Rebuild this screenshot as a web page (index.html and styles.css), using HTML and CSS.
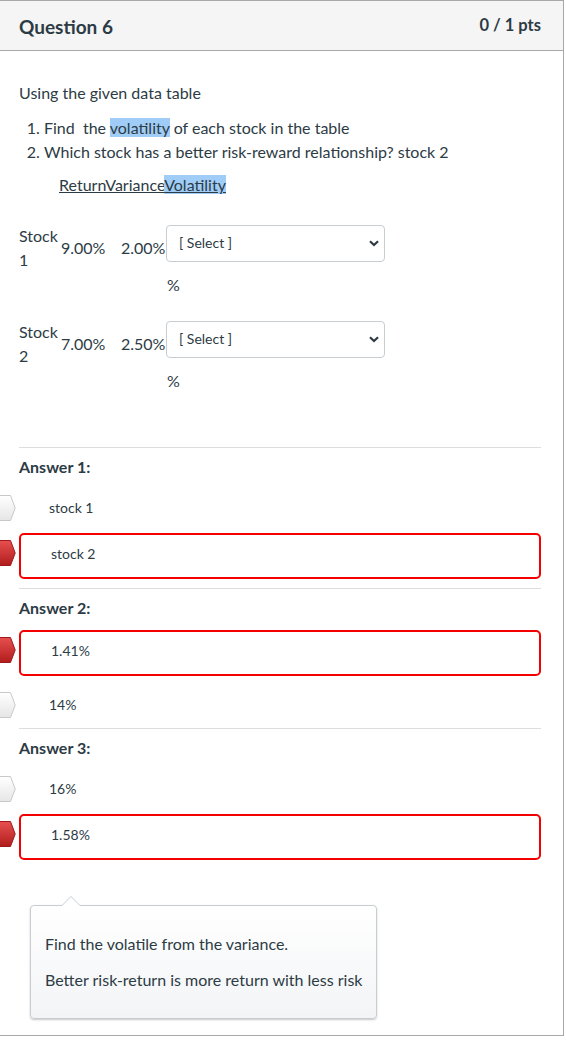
FILE: index.html
```html
<!DOCTYPE html>
<html>
<head>
<meta charset="utf-8">
<link rel="stylesheet" href="styles.css">
</head>
<body>
<div class="card">
  <div class="qhead">
    <div class="qtitle">Question 6</div>
    <div class="qpts">0 / 1 pts</div>
  </div>
  <div class="qbody">
    <p class="intro">Using the given data table</p>
    <ol class="tasks">
      <li>Find&nbsp; the <span class="hl">volatility</span> of each stock in the table</li>
      <li>Which stock has a better risk-reward relationship? stock 2</li>
    </ol>
    <p class="thead">ReturnVariance<span class="hl">Volatility</span></p>

    <div class="trow first">
      <div class="c-name">Stock 1</div>
      <div class="c-ret">9.00%</div>
      <div class="c-var">2.00%</div>
      <div class="c-sel">
        <div class="select"><span>[ Select ]</span><svg width="10" height="7" viewBox="0 0 10 7"><path d="M1 1.2 L5 5 L9 1.2" fill="none" stroke="#2d3b45" stroke-width="2.2"/></svg></div>
        <div class="pct">%</div>
      </div>
    </div>
    <div class="trow">
      <div class="c-name">Stock 2</div>
      <div class="c-ret">7.00%</div>
      <div class="c-var">2.50%</div>
      <div class="c-sel">
        <div class="select"><span>[ Select ]</span><svg width="10" height="7" viewBox="0 0 10 7"><path d="M1 1.2 L5 5 L9 1.2" fill="none" stroke="#2d3b45" stroke-width="2.2"/></svg></div>
        <div class="pct">%</div>
      </div>
    </div>

    <div class="ans">
      <div class="alabel">Answer 1:</div>
      <div class="opt">
        <svg class="flag" width="16" height="26" viewBox="0 0 16 26"><defs><linearGradient id="gw1" x1="0" y1="0" x2="0" y2="1"><stop offset="0" stop-color="#ffffff"/><stop offset="1" stop-color="#e6e6e6"/></linearGradient></defs><polygon points="-1,0.5 10.5,0.5 15.2,13 10.5,25.5 -1,25.5" fill="url(#gw1)" stroke="#c8c8c8" stroke-width="1"/></svg>
        <div class="box">stock 1</div>
      </div>
      <div class="opt sel">
        <svg class="flag" width="16" height="26" viewBox="0 0 16 26"><defs><linearGradient id="gr1" x1="0" y1="0" x2="0" y2="1"><stop offset="0" stop-color="#e85050"/><stop offset="1" stop-color="#b01c1c"/></linearGradient></defs><polygon points="-1,0.5 10.5,0.5 15.2,13 10.5,25.5 -1,25.5" fill="url(#gr1)" stroke="#a01818" stroke-width="1"/></svg>
        <div class="box">stock 2</div>
      </div>
    </div>

    <div class="ans">
      <div class="alabel">Answer 2:</div>
      <div class="opt sel">
        <svg class="flag" width="16" height="26" viewBox="0 0 16 26"><defs><linearGradient id="gr2" x1="0" y1="0" x2="0" y2="1"><stop offset="0" stop-color="#e85050"/><stop offset="1" stop-color="#b01c1c"/></linearGradient></defs><polygon points="-1,0.5 10.5,0.5 15.2,13 10.5,25.5 -1,25.5" fill="url(#gr2)" stroke="#a01818" stroke-width="1"/></svg>
        <div class="box">1.41%</div>
      </div>
      <div class="opt">
        <svg class="flag" width="16" height="26" viewBox="0 0 16 26"><defs><linearGradient id="gw2" x1="0" y1="0" x2="0" y2="1"><stop offset="0" stop-color="#ffffff"/><stop offset="1" stop-color="#e6e6e6"/></linearGradient></defs><polygon points="-1,0.5 10.5,0.5 15.2,13 10.5,25.5 -1,25.5" fill="url(#gw2)" stroke="#c8c8c8" stroke-width="1"/></svg>
        <div class="box">14%</div>
      </div>
    </div>

    <div class="ans">
      <div class="alabel">Answer 3:</div>
      <div class="opt">
        <svg class="flag" width="16" height="26" viewBox="0 0 16 26"><defs><linearGradient id="gw3" x1="0" y1="0" x2="0" y2="1"><stop offset="0" stop-color="#ffffff"/><stop offset="1" stop-color="#e6e6e6"/></linearGradient></defs><polygon points="-1,0.5 10.5,0.5 15.2,13 10.5,25.5 -1,25.5" fill="url(#gw3)" stroke="#c8c8c8" stroke-width="1"/></svg>
        <div class="box">16%</div>
      </div>
      <div class="opt sel">
        <svg class="flag" width="16" height="26" viewBox="0 0 16 26"><defs><linearGradient id="gr3" x1="0" y1="0" x2="0" y2="1"><stop offset="0" stop-color="#e85050"/><stop offset="1" stop-color="#b01c1c"/></linearGradient></defs><polygon points="-1,0.5 10.5,0.5 15.2,13 10.5,25.5 -1,25.5" fill="url(#gr3)" stroke="#a01818" stroke-width="1"/></svg>
        <div class="box">1.58%</div>
      </div>
    </div>

    <div class="comment">
      <p>Find the volatile from the variance.</p>
      <p>Better risk-return is more return with less risk</p>
    </div>
  </div>
</div>
</body>
</html>
```
FILE: styles.css
```css
html, body {
  margin: 0;
  padding: 0;
  background: #ffffff;
}
body {
  font-family: Lato, "Open Sans", "Liberation Sans", sans-serif;
  color: #2d3b45;
  font-size: 16px;
}
.card {
  width: 564px;
  box-sizing: border-box;
  border: 1px solid #a8a8a8;
  border-left: none;
}
.qhead {
  height: 49px;
  background: #f5f5f5;
  border-bottom: 1px solid #a8a8a8;
  display: flex;
  justify-content: space-between;
  align-items: flex-start;
  padding: 0 22px 0 19px;
}
.qtitle {
  font-weight: 700;
  font-size: 19px;
  line-height: 24px;
  margin-top: 14px;
}
.qpts {
  font-weight: 700;
  font-size: 16.5px;
  line-height: 24px;
  margin-top: 12px;
}
.qbody {
  padding: 30px 22px 16px 19px;
}
.intro {
  margin: 0 0 11px;
  line-height: 24px;
}
.tasks {
  margin: 0;
  padding-left: 25px;
  line-height: 24px;
}
.hl {
  background: #9fcdf7;
}
.thead {
  margin: 9px 0 0;
  padding-left: 40px;
  line-height: 24px;
  text-decoration: underline;
}
.trow {
  display: flex;
  align-items: flex-start;
  margin-top: 23px;
  line-height: 24px;
}
.trow.first {
  margin-top: 27px;
}
.c-name {
  width: 42px;
}
.c-ret {
  width: 60px;
  padding-top: 12px;
}
.c-var {
  width: 45px;
  padding-top: 12px;
}
.c-sel {
  width: 219px;
  padding-top: 1px;
}
.select {
  height: 37px;
  box-sizing: border-box;
  border: 1px solid #c7cdd1;
  border-radius: 4px;
  display: flex;
  align-items: center;
  justify-content: space-between;
  padding: 0 5px 0 12px;
  font-size: 14px;
  background: #fff;
}
.select span {
  margin-top: -2px;
}
.pct {
  margin-top: 11px;
  padding-left: 1px;
}
.ans {
  border-top: 1px solid #dddddd;
  padding-top: 7px;
  display: flex;
  flex-direction: column;
}
.trow + .ans {
  margin-top: 54px;
}
.alabel {
  font-weight: 700;
  line-height: 24px;
}
.opt {
  display: flex;
  align-items: center;
  margin-left: -19px;
  margin-top: 6px;
}
.opt.sel {
  margin-top: 10px;
}
.opt + .opt.sel {
  margin-top: 2px;
}
.opt:last-child.sel {
  margin-bottom: 9px;
}
.flag {
  width: 16px;
  height: 26px;
  margin-right: 3px;
  flex: none;
}
.opt.sel .flag {
  margin-top: -6px;
}
.box {
  flex: 1;
  height: 46px;
  box-sizing: border-box;
  border: 2px solid transparent;
  border-radius: 5px;
  padding-left: 28px;
  padding-bottom: 2px;
  display: flex;
  align-items: center;
  font-size: 14px;
}
.opt.sel .box {
  border-color: #f50000;
  padding-left: 30px;
  padding-bottom: 5px;
}
.comment {
  position: relative;
  margin: 36px 0 0 11px;
  width: 347px;
  box-sizing: border-box;
  border: 1px solid #c7cdd1;
  border-radius: 4px;
  background: linear-gradient(#ffffff, #f3f4f6);
  box-shadow: 0 1px 2px rgba(0, 0, 0, 0.22);
  padding: 26px 8px 26px 14px;
  line-height: 24px;
  white-space: nowrap;
}
.comment p {
  margin: 0;
}
.comment p + p {
  margin-top: 12px;
}
.comment::before {
  content: "";
  position: absolute;
  top: -10px;
  left: 30px;
  border-left: 10px solid transparent;
  border-right: 10px solid transparent;
  border-bottom: 10px solid #c7cdd1;
}
.comment::after {
  content: "";
  position: absolute;
  top: -9px;
  left: 31px;
  border-left: 9px solid transparent;
  border-right: 9px solid transparent;
  border-bottom: 9px solid #ffffff;
}
```
